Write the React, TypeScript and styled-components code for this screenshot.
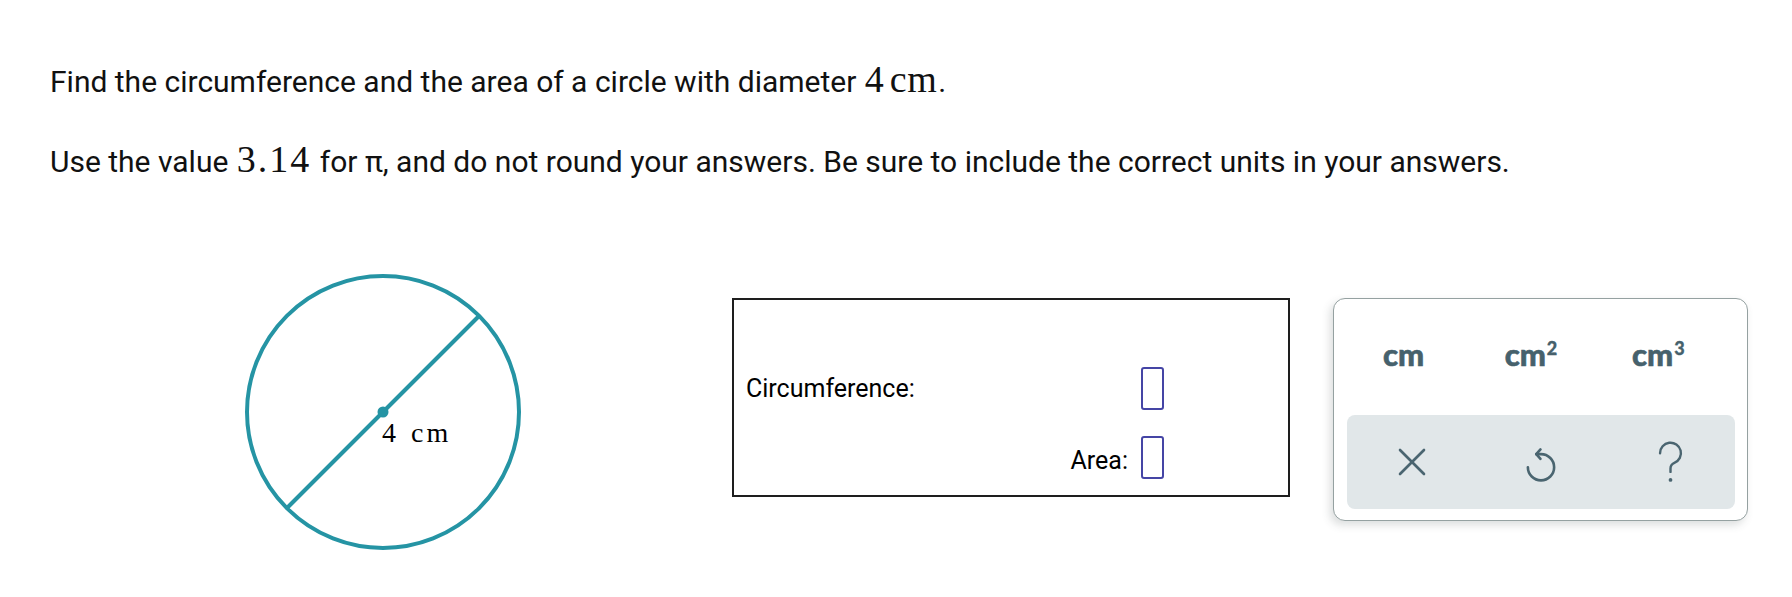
import React from "react";
import styled, { createGlobalStyle } from "styled-components";

const GlobalStyle = createGlobalStyle`
  html, body {
    margin: 0;
    padding: 0;
    background: #ffffff;
  }
  body {
    font-family: Roboto, "Liberation Sans", Arial, sans-serif;
    color: #111111;
  }
`;

const Page = styled.div`
  padding: 62px 0 0 50px;
  width: 1792px;
  height: 597px;
  box-sizing: border-box;
  overflow: hidden;
`;

const Question = styled.p<{ $gap: number }>`
  margin: ${(p) => p.$gap}px 0 0 0;
  font-size: 30px;
  line-height: 40px;
  white-space: nowrap;
`;

const MathText = styled.span<{ $spread?: number }>`
  font-family: "Liberation Serif", "Times New Roman", serif;
  font-size: 38px;
  line-height: 0;
  margin: 0 1px;
  letter-spacing: ${(p) => p.$spread ?? 0}px;
`;

const MathUnit = styled.span`
  margin-left: 6px;
  letter-spacing: 0.5px;
`;

const Figures = styled.div`
  display: flex;
  align-items: flex-start;
  margin: 90px 0 0 193px;
`;

const CircleSvg = styled.svg`
  flex: none;
  display: block;
`;

const AnswerBox = styled.div`
  flex: none;
  margin: 26px 0 0 207px;
  width: 558px;
  height: 199px;
  box-sizing: border-box;
  border: 2px solid #1e1e1e;
  padding: 67px 124px 0 12px;
`;

const AnswerGrid = styled.div`
  display: grid;
  grid-template-columns: 1fr auto;
  column-gap: 13px;
  row-gap: 26px;
  align-items: center;
`;

const AnswerLabel = styled.span<{ $align: "start" | "end" }>`
  justify-self: ${(p) => p.$align};
  font-size: 25px;
  color: #000;
  position: relative;
  top: ${(p) => (p.$align === "end" ? 3 : 0)}px;
`;

const AnswerInput = styled.input`
  display: block;
  width: 23px;
  height: 43px;
  box-sizing: border-box;
  margin: 0;
  padding: 0;
  border: 2.5px solid #4545a5;
  border-radius: 3px;
  background: #fff;
  outline: none;
`;

const UnitPanel = styled.div`
  flex: none;
  margin: 26px 0 0 43px;
  width: 415px;
  height: 223px;
  box-sizing: border-box;
  border: 1.5px solid #95a1a1;
  border-radius: 12px;
  background: #fff;
  box-shadow: -3px 4px 9px rgba(60, 70, 70, 0.18);
  display: flex;
  flex-direction: column;
`;

const UnitRow = styled.div`
  height: 116px;
  display: grid;
  grid-template-columns: repeat(3, 1fr);
  align-items: center;
  padding: 0 25px 0 6px;
`;

const UnitButton = styled.span`
  justify-self: center;
  font-family: Lato, "Open Sans", sans-serif;
  font-weight: 900;
  font-size: 31px;
  color: #46616c;
  -webkit-text-stroke: 0.6px #46616c;
  position: relative;
  top: -3px;
`;

const Power = styled.span`
  font-size: 18px;
  vertical-align: 11px;
  margin-left: 1px;
  -webkit-text-stroke: 0.3px #46616c;
`;

const ToolRow = styled.div`
  margin: 0 12px 11px 13px;
  height: 94px;
  border-radius: 8px;
  background: #e1e7e9;
  display: grid;
  grid-template-columns: repeat(3, 1fr);
  align-items: center;
  justify-items: center;
`;

const ToolIcon = styled.svg`
  display: block;
  fill: none;
  stroke: #4a6570;
  stroke-linecap: round;
  stroke-linejoin: round;
`;

const teal = "#2594a4";

export default function App() {
  return (
    <>
      <GlobalStyle />
      <Page>
        <Question $gap={0}>
          Find the circumference and the area of a circle with diameter{" "}
          <MathText>
            4<MathUnit>cm</MathUnit>
          </MathText>
          .
        </Question>
        <Question $gap={40}>
          Use the value <MathText $spread={2}>3.14</MathText> for π, and do not
          round your answers. Be sure to include the correct units in your
          answers.
        </Question>
        <Figures>
          <CircleSvg width="282" height="282" viewBox="0 0 282 282">
            <circle cx="140" cy="140" r="136" fill="none" stroke={teal} strokeWidth="4" />
            <line x1="44" y1="236" x2="236" y2="44" stroke={teal} strokeWidth="4" />
            <circle cx="140" cy="140" r="5.5" fill={teal} />
            <text
              x="139"
              y="170"
              fontFamily="'Liberation Serif', 'Times New Roman', serif"
              fontSize="28"
              fill="#000"
            >
              4
              <tspan dx="15" letterSpacing="3">
                cm
              </tspan>
            </text>
          </CircleSvg>
          <AnswerBox>
            <AnswerGrid>
              <AnswerLabel $align="start">Circumference:</AnswerLabel>
              <AnswerInput aria-label="Circumference" />
              <AnswerLabel $align="end">Area:</AnswerLabel>
              <AnswerInput aria-label="Area" />
            </AnswerGrid>
          </AnswerBox>
          <UnitPanel>
            <UnitRow>
              <UnitButton>cm</UnitButton>
              <UnitButton>
                cm<Power>2</Power>
              </UnitButton>
              <UnitButton>
                cm<Power>3</Power>
              </UnitButton>
            </UnitRow>
            <ToolRow>
              <ToolIcon width="30" height="30" viewBox="0 0 30 30" strokeWidth="2.6">
                <line x1="3" y1="3" x2="27" y2="27" />
                <line x1="27" y1="3" x2="3" y2="27" />
              </ToolIcon>
              <ToolIcon width="34" height="42" viewBox="0 0 32 40" strokeWidth="2.5">
                <path d="M3.5 25 A12.5 12.5 0 1 0 16 12.5 H11.5" />
                <path d="M15.5 8 L11.5 12.5 L15.5 17" />
              </ToolIcon>
              <ToolIcon width="31" height="44" viewBox="0 0 28 40" strokeWidth="2.2">
                <path d="M4.5 12 A9.5 9.5 0 1 1 17.5 20.8 C15.2 21.8 14 23.5 14 26 V29" />
                <circle cx="14" cy="36.3" r="1.7" fill="#4a6570" stroke="none" />
              </ToolIcon>
            </ToolRow>
          </UnitPanel>
        </Figures>
      </Page>
    </>
  );
}
